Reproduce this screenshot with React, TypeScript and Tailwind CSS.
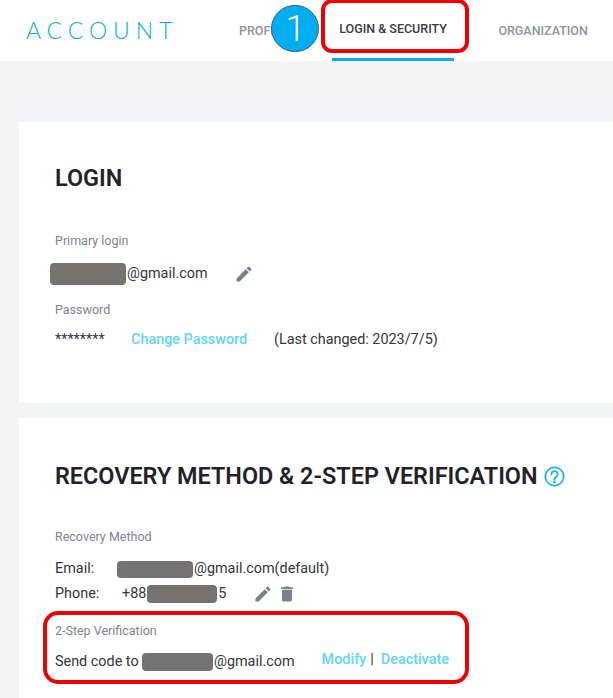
import React from 'react';

const Redact = ({ className }: { className: string }) => (
  <span className={`inline-block rounded-[4px] bg-[#767271] ${className}`} />
);

const PencilIcon = () => (
  <svg className="w-[20px] h-[20px] text-[#78818f]" fill="currentColor" viewBox="0 0 24 24">
    <path d="M3 17.25V21h3.75L17.81 9.94l-3.75-3.75L3 17.25zM20.71 7.04a1 1 0 000-1.41l-2.34-2.34a1 1 0 00-1.41 0l-1.83 1.83 3.75 3.75 1.83-1.83z" />
  </svg>
);

const TrashIcon = () => (
  <svg className="w-[20px] h-[20px] text-[#78818f]" fill="currentColor" viewBox="0 0 24 24">
    <path d="M6 19c0 1.1.9 2 2 2h8c1.1 0 2-.9 2-2V7H6v12zM19 4h-3.5l-1-1h-5l-1 1H5v2h14V4z" />
  </svg>
);

const Label = ({ children }: { children: React.ReactNode }) => (
  <div className="text-[12.5px] leading-[16px] text-[#7c8590]">{children}</div>
);

const App: React.FC = () => {
  return (
    <div className="relative h-[698px] w-[613px] overflow-hidden bg-[#f3f4f6] font-['Roboto',sans-serif] text-[14.4px] text-[#33363b]">
      <header className="flex h-[61px] items-center bg-white pl-[26px]">
        <div className="w-[206px] font-['Lato',sans-serif] text-[23px] font-light leading-none tracking-[5.9px] text-[#00aee8]">ACCOUNT</div>
        <nav className="flex h-full gap-[37.5px] text-[12.5px] font-medium">
          <div className="flex items-center px-[7px] pt-[1px] text-[#8d949e]">PROFILE</div>
          <div className="flex items-center border-b-[3px] border-[#00b0eb] px-[7px] pt-[1px] text-[#363a42]">LOGIN &amp; SECURITY</div>
          <div className="flex items-center px-[7px] pt-[1px] text-[#8d949e]">ORGANIZATION</div>
        </nav>
      </header>

      <main className="flex flex-col gap-[15px] pl-[19px] pt-[61px]">
        <section className="h-[281px] bg-white pl-[36px] pt-[41px]">
          <h2 className="text-[23.4px] font-semibold leading-[30px] text-[#1f2329]">LOGIN</h2>
          <div className="mt-[40px]"><Label>Primary login</Label></div>
          <div className="mt-[14px] flex h-[22px] items-center">
            <Redact className="-ml-[5px] h-[22px] w-[76px]" />
            <span className="ml-[1px]">@gmail.com</span>
            <span className="ml-[26px] flex"><PencilIcon /></span>
          </div>
          <div className="mt-[17px]"><Label>Password</Label></div>
          <div className="mt-[12px] flex h-[20px] items-center">
            <span className="w-[76px]">********</span>
            <span className="w-[143px] font-medium text-[#62d5f7]">Change Password</span>
            <span>(Last changed: 2023/7/5)</span>
          </div>
        </section>

        <section className="h-[300px] bg-white pl-[36px] pt-[43px]">
          <h2 className="flex items-center text-[23.4px] font-semibold leading-[30px] text-[#1f2329]">
            RECOVERY METHOD &amp; 2-STEP VERIFICATION
            <svg className="ml-[6px] h-[21px] w-[21px] text-[#12b3e8]" fill="none" stroke="currentColor" strokeWidth="2" viewBox="0 0 24 24">
              <circle cx="12" cy="12" r="10.5" />
              <path d="M8.5 9.5a3.5 3.5 0 116 2.4c-1.2 1.1-2.5 1.6-2.5 3.4" strokeLinecap="round" />
              <circle cx="12" cy="18.3" r="0.6" fill="currentColor" />
            </svg>
          </h2>
          <div className="mt-[38px]"><Label>Recovery Method</Label></div>
          <div className="mt-[14px] flex h-[20px] items-center">
            <span className="w-[62px]">Email:</span>
            <Redact className="h-[17px] w-[76px]" />
            <span className="ml-[1px]">@gmail.com(default)</span>
          </div>
          <div className="mt-[5px] flex h-[20px] items-center">
            <span className="w-[67px]">Phone:</span>
            <span>+88</span>
            <Redact className="ml-[1px] h-[18px] w-[70px]" />
            <span className="ml-[1px]">5</span>
            <span className="ml-[27px] flex gap-[4px]"><PencilIcon /><TrashIcon /></span>
          </div>
          <div className="mt-[19px]"><Label>2-Step Verification</Label></div>
          <div className="mt-[13px] flex h-[20px] items-center">
            <span className="w-[87px]">Send code to</span>
            <Redact className="h-[18px] w-[71px]" />
            <span className="ml-[1px]">@gmail.com</span>
            <span className="ml-[27px] -mt-[5px] font-medium text-[#62d5f7]">Modify</span>
            <span className="ml-[4px] -mt-[5px]">|</span>
            <span className="ml-[7px] -mt-[5px] font-medium text-[#62d5f7]">Deactivate</span>
          </div>
        </section>
      </main>

      {/* annotations on top of the page */}
      <div className="absolute left-[271px] top-[5px] flex h-[47px] w-[48px] items-center justify-center rounded-full border border-[#2b5f8f] bg-[#00aeef] pl-[1px] font-['Roboto',sans-serif] text-[36px] font-light leading-none text-white">1</div>
      <div className="absolute left-[321px] top-[-1px] h-[54px] w-[148px] rounded-[11px] border-[4px] border-[#f00000]" />
      <div className="absolute left-[43px] top-[611px] h-[73px] w-[426px] rounded-[15px] border-[4px] border-[#f00000]" />
    </div>
  );
};

export default App;
